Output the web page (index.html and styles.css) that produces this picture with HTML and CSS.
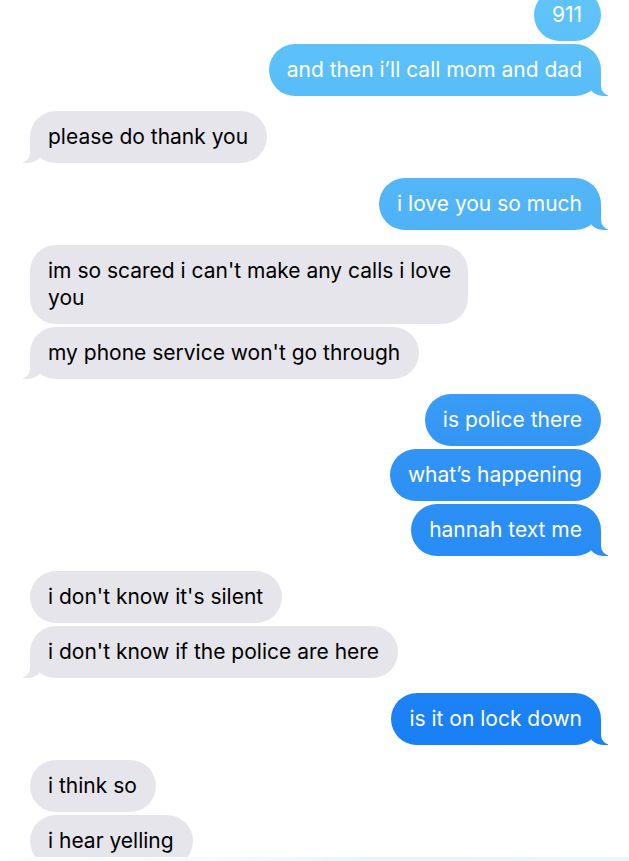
FILE: index.html
```html
<!DOCTYPE html>
<html lang="en">
<head>
<meta charset="utf-8">
<title>Messages</title>
<link rel="stylesheet" href="styles.css">
</head>
<body>
<div class="screen">
  <div class="thread">
    <div class="group">
      <div class="msg sent">911</div>
      <div class="msg sent tail">and then i’ll call mom and dad</div>
    </div>
    <div class="group">
      <div class="msg recv tail">please do thank you</div>
    </div>
    <div class="group">
      <div class="msg sent tail">i love you so much</div>
    </div>
    <div class="group">
      <div class="msg recv wide">im so scared i can't make any calls i love you</div>
      <div class="msg recv tail">my phone service won't go through</div>
    </div>
    <div class="group">
      <div class="msg sent">is police there</div>
      <div class="msg sent">what’s happening</div>
      <div class="msg sent tail">hannah text me</div>
    </div>
    <div class="group">
      <div class="msg recv">i don't know it's silent</div>
      <div class="msg recv tail">i don't know if the police are here</div>
    </div>
    <div class="group">
      <div class="msg sent tail">is it on lock down</div>
    </div>
    <div class="group">
      <div class="msg recv">i think so</div>
      <div class="msg recv">i hear yelling</div>
    </div>
  </div>
  <div class="bar"></div>
</div>
</body>
</html>
```
FILE: styles.css
```css
html, body {
  margin: 0;
  padding: 0;
  background: #ffffff;
}

body {
  width: 629px;
  height: 861px;
  overflow: hidden;
  font-family: Inter, "Liberation Sans", Arial, sans-serif;
  font-size: 21px;
  line-height: 27px;
}

.screen {
  display: flex;
  flex-direction: column;
  height: 861px;
}

.thread {
  flex: 1;
  min-height: 0;
  overflow: hidden;
  display: flex;
  flex-direction: column;
  gap: 15px;
  padding: 0 28px 0 30px;
  margin-top: -11px;
}

.group {
  display: flex;
  flex-direction: column;
  gap: 3px;
}

.msg {
  position: relative;
  box-sizing: border-box;
  max-width: 438px;
  padding: 12px 19px 13px 18px;
  border-radius: 26px;
  flex-shrink: 0;
}

.sent {
  align-self: flex-end;
  color: #ffffff;
  background: linear-gradient(to bottom, #60c4fa 0px, #4fb2f7 230px, #2f92f5 470px, #177ef5 760px, #0f74f4 861px) fixed;
}

.recv {
  align-self: flex-start;
  color: #000000;
  background: #e6e5eb;
}

.wide {
  width: 438px;
  padding-right: 8px;
}

.tail::before,
.tail::after {
  content: "";
  position: absolute;
  bottom: 0;
  height: 25px;
}

.sent.tail::before {
  right: -7px;
  width: 20px;
  background: linear-gradient(to bottom, #60c4fa 0px, #4fb2f7 230px, #2f92f5 470px, #177ef5 760px, #0f74f4 861px) fixed;
  border-bottom-left-radius: 16px 14px;
}

.sent.tail::after {
  right: -26px;
  width: 26px;
  background: #ffffff;
  border-bottom-left-radius: 10px;
}

.recv.tail::before {
  left: -7px;
  width: 20px;
  background: #e6e5eb;
  border-bottom-right-radius: 16px 14px;
}

.recv.tail::after {
  left: -26px;
  width: 26px;
  background: #ffffff;
  border-bottom-right-radius: 10px;
}

.bar {
  height: 4px;
  flex-shrink: 0;
  background: linear-gradient(to right, #fbfdfe 0%, #f6fafd 35%, #e4f3fc 60%, #e8f5fd 100%);
}
```
